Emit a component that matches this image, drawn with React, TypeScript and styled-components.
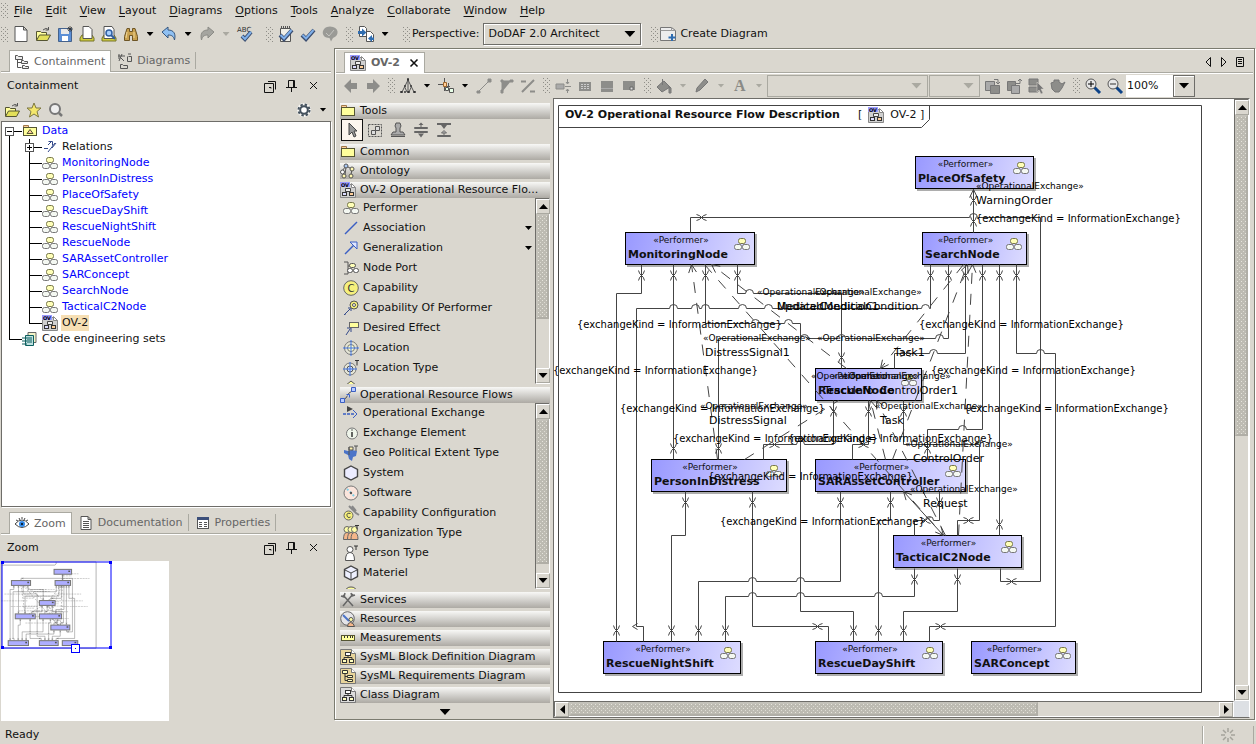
import React from "react";
import styled, { createGlobalStyle, css } from "styled-components";

/* ---------- theme ---------- */

const face = "#dad7cf";
const edgeDark = "#6e6d69";
const edgeMid = "#aaa9a1";
const ink = "#111";
const line = "#444";
const linkBlue = "#0000ff";

const GlobalStyle = createGlobalStyle`
  * { box-sizing: border-box; }
  body {
    margin: 0;
    background: ${face};
    color: ${ink};
    font: 11px/14px "DejaVu Sans", sans-serif;
    overflow: hidden;
  }
  button, input, select {
    font: inherit;
    color: inherit;
    margin: 0;
    padding: 0;
    border: 0;
    border-radius: 0;
    background: none;
  }
  ul { list-style: none; margin: 0; padding: 0; }
  svg { display: block; flex: none; }
`;

const dots = (a: string, b: string) => css`
  background-image:
    conic-gradient(from 270deg at 1px 1px, ${a} 90deg, transparent 0),
    conic-gradient(from 270deg at 1px 1px, ${b} 90deg, transparent 0);
  background-size: 4px 4px;
  background-position: 0 0, 2px 2px;
`;

/* ---------- icons ---------- */

const g = "#555";
const gray = "#8d8d8a";
const page = (fill = "#fff") => <path d="M3 1.500h7l3 3v10H3z M10 1.500v3h3" fill={fill} stroke={g} />;
const performer = (
  <>
    <rect x="4.500" y="2.500" width="7" height="5" rx="2" fill="#ffffb8" stroke="#77774a" />
    <path d="M6 8v1M10 8v1" stroke={g} />
    <rect x="0.500" y="8.500" width="7" height="5" rx="2" fill="#f4f8f2" stroke="#777" />
    <rect x="8.500" y="8.500" width="7" height="5" rx="2" fill="#f4f8f2" stroke="#777" />
  </>
);
const ovDoc = (
  <>
    <path d="M0.500 2.500h11l4 3v10h-15z" fill="#d0d0d0" stroke="#888" />
    <path d="M11.500 1.500v4h4z" fill="#fff" stroke="#888" />
    <rect x="0" y="0" width="10" height="5" fill="#9b9bff" />
    <text x="1" y="5" fontSize="5" fontWeight="bold" fill="#000">OV</text>
    <path d="M5.500 6.500h5v3h-5zM4 12v-1l2-1M12 12v-1l-2-1" fill="#eee" stroke="#444" />
    <rect x="2.500" y="10.500" width="4" height="3" fill="#dcdcff" stroke="#333" />
    <rect x="9.500" y="10.500" width="4" height="3" fill="#ffcf9a" stroke="#333" />
  </>
);
const folder = (
  <>
    <path d="M1.500 4.500v-2h5v2" fill="#ffcf9a" stroke="#a07a4a" />
    <rect x="1.500" y="4.500" width="13" height="8" fill="#ffff9c" stroke="#555533" />
  </>
);
const openFolder = (
  <>
    <path d="M1.500 14V5.500h4l1 1h5V9" fill="#ffff9c" stroke="#555533" />
    <path d="M1.500 14.500l3-5.500h11l-3 5.500z" fill="#e3e05a" stroke="#555533" />
    <path d="M8 4q3-3 5.500-.5M13.500 1v3h-3" fill="none" stroke={g} />
  </>
);
const boxDoc = (fill: string) => (
  <>
    <path d="M0.500 0.500h11l4 4v11h-15z" fill={fill} stroke="#777" />
    <path d="M11.500 0.500v4h4" fill="#fff" stroke="#777" />
  </>
);
const tree3 = (
  <>
    <path d="M8 6v2.500M4 11V8.500h8V11" fill="none" stroke="#333" />
    <rect x="5.500" y="3.500" width="5" height="3" fill="#fff" stroke="#333" />
    <rect x="2.500" y="10.500" width="4" height="3" fill="#ffffc0" stroke="#333" />
    <rect x="9.500" y="10.500" width="4" height="3" fill="#ffffc0" stroke="#333" />
  </>
);
const check = <path d="M2 9l4 4 8-9" fill="none" stroke="#3a4d70" strokeWidth="4" />;
const checkFill = <path d="M2.500 9l3.500 3.500 7.500-8.500" fill="none" stroke="#7fb0ea" strokeWidth="2" />;
const diagLine = <path d="M2 14L14 2" stroke="#3a5fc4" strokeWidth="1.500" />;
const target = (
  <>
    <circle cx="8" cy="8" r="6.500" fill="#e6e6d6" stroke="#777" />
    <circle cx="8" cy="8" r="3.500" fill="#ffffc8" stroke="#777" />
    <path d="M8 0v16M0 8h16" stroke="#3f74e8" />
  </>
);
const cube = (fill: string) => (
  <path d="M8 1l6.500 3.500v7L8 15l-6.500-3.500v-7z" fill={fill} stroke="#444" strokeWidth="1.400" />
);
const person = (x: number, fill: string) => (
  <>
    <path d={`M${x - 3.5} 14.500q0-7 3.500-7t3.500 7z`} fill={fill} stroke="#666" />
    <circle cx={x} cy="4.500" r="3" fill="#ffffa8" stroke="#666" />
  </>
);

const glyphs: Record<string, React.ReactNode> = {
  performer,
  ovDoc,
  folder,
  openFolder,
  newDoc: <path d="M2 .5h8.500l3.500 3.500v11.500H2z M10.500 .5v3.500H14" fill="#fff" stroke={g} />,
  save: (
    <>
      <path d="M1.500 2.500h13v13h-13z" fill="#5b8fd6" stroke="#45628c" />
      <rect x="4" y="3" width="8" height="5" fill="#e8e8e8" />
      <rect x="5" y="10" width="6" height="5" fill="#fff" />
      <path d="M13 0v6M10 3h6M11 1l4 4M15 1l-4 4" stroke="#333" strokeWidth=".8" />
    </>
  ),
  print: (
    <>
      <path d="M1 12l2-3h10l2 3v3H1z" fill="#d2ce3c" stroke="#77752a" />
      <path d="M4 .5h6l3 3v9H4z" fill="#fff" stroke={g} />
    </>
  ),
  preview: (
    <>
      <path d="M1 12l2-3h10l2 3v3H1z" fill="#d2ce3c" stroke="#77752a" />
      <path d="M3 .5h8l2 3v9H3z" fill="#fff" stroke={g} />
      <circle cx="8" cy="7" r="3" fill="#a8d0ff" stroke="#2f5ea0" strokeWidth="1.500" />
      <path d="M10 9l4 4" stroke="#2f5ea0" strokeWidth="2" />
    </>
  ),
  binoculars: (
    <>
      <path d="M4 2.500h2.500v3h3v-3H12l2.500 8v4H9.500v-5h-3v5h-5v-4z" fill="#c8a04e" stroke="#6d5526" />
      <path d="M4 6l-1 6M11 6v6" stroke="#efd79a" />
    </>
  ),
  undo: <path d="M1 6l6-5v3c6 0 8 4 6.500 10-1-4-3-5-6.500-5v3z" fill="#8fc0f2" stroke="#34557d" />,
  redo: <path d="M15 6L9 1v3C3 4 1 8 2.500 14c1-4 3-5 6.500-5v3z" fill="#a5a5a0" stroke="#8b8b86" />,
  spell: (
    <>
      <text x="0" y="6" fontSize="7" fill="#333">ABC</text>
      <path d="M5 10l3 3 6-7" fill="none" stroke="#3a4d70" strokeWidth="4" />
      <path d="M5 10l3 3 6-7" fill="none" stroke="#7fb0ea" strokeWidth="2" />
    </>
  ),
  checkDoc: (
    <>
      <path d="M2.500 2.500h10v13h-10z" fill="#f0f0e8" stroke={g} />
      <path d="M3 1h9" stroke={g} strokeWidth="2" strokeDasharray="1 1" />
      {check}{checkFill}
    </>
  ),
  check: <>{check}{checkFill}</>,
  balloon: (
    <>
      <path d="M8 .5c9 0 10 9 3 11.500L9 15.500 7.500 12C-2 12-1 .5 8 .5z" fill="#9a9a96" />
      <path d="M4 7l3 3 5-6" fill="none" stroke="#c4c4c0" />
    </>
  ),
  transfer: (
    <>
      <path d="M1.500 .5h5l2 2v8h-7zM8.500 5.500h4l3 3v7h-7z" fill="#fff" stroke={g} />
      <path d="M0 5h4V2.500l4.500 4L4 10.500V8H0zM16 11.500h-2V9l-4 3.500 4 3.500v-2h2z" fill="#2f6db0" />
    </>
  ),
  createDiagram: (
    <>
      <path d="M.5 1.500h11l4 3v10H.5z" fill="#ededed" stroke="#777" />
      <path d="M11.500 1.500v3h4M.5 4.500h11" fill="none" stroke="#999" />
      <path d="M12 8v7M8.500 11.500h7" stroke="#2f6db0" strokeWidth="2" />
    </>
  ),
  containment: (
    <>
      <path d="M3.500 5v8.500h4M3.500 8.500h4" fill="none" stroke={g} />
      <path d="M1.500 1.500h2l1 1h4v3h-7zM7.500 6.500h2l1 1h3v2h-6zM8.500 11.500h2l1 1h3v2h-6z" fill="#eee" stroke={g} />
    </>
  ),
  diagrams: (
    <path d="M1 3h7M2 1v5M5 1l-3 7M3 4l4 4M11.500 3.500h3v5h-4v-5M11 1h3M3.500 11.500h2l1 1h4v3h-7z" fill="none" stroke={g} />
  ),
  float: <path d="M2.500 5.500h9v9h-9zM6 3.500h7.500v8M7 9.500h2v1" fill="none" stroke="#111" />,
  pin: <path d="M4.500 9V2.500h6V9M2 9.500h11M7.500 10v4M9.500 3v6" fill="none" stroke="#111" />,
  close: <path d="M4 4l7 7M11 4l-7 7" stroke="#111" />,
  star: <path d="M8 1l2 5h5l-4 3.500 1.500 5.500L8 12l-4.500 3L5 9.500 1 6h5z" fill="#f4e76c" stroke="#7c7740" />,
  search: (
    <>
      <circle cx="7" cy="7" r="5" fill="#eee" stroke="#777" strokeWidth="2" />
      <path d="M11 11l3 3" stroke="#777" strokeWidth="2.500" />
    </>
  ),
  gear: (
    <>
      <circle cx="8" cy="8" r="7" fill="#f6f5f2" />
      <circle cx="8" cy="8" r="5.500" fill="none" stroke="#45525e" strokeWidth="2" strokeDasharray="2.400 1.920" />
      <circle cx="8" cy="8" r="3.800" fill="#fff" stroke="#45525e" strokeWidth="2" />
    </>
  ),
  package: (
    <>
      <path d="M1.500 4.500v-2h5v2" fill="#ffcf9a" stroke="#a07a4a" />
      <rect x="1.500" y="4.500" width="13" height="8" fill="#ffff9c" stroke="#555533" />
      <path d="M8 6.500l3 4H5z" fill="#ffcf9a" stroke="#555533" />
    </>
  ),
  relations: (
    <path d="M2 9.500h4M6 6l4-4M6.500 2.500h4v4M6 13l7-9M10 9l4-5" fill="none" stroke="#33498a" />
  ),
  codeSets: (
    <>
      <path d="M6 1.500h8v10H6z" fill="#f4f4c8" stroke="#666" />
      <path d="M3.500 4.500h8v10h-8z" fill="#bfe0e0" stroke="#0c5f5f" />
      <path d="M0 7h5M0 10h5M0 13h5M5 7h5M5 9h5M5 11h5" stroke="#0c5f5f" />
    </>
  ),
  eye: (
    <>
      <path d="M1 8q7-8 14 0-7 7-14 0z" fill="#fff" stroke="#444" />
      <path d="M2 4l2 1M8 1v2M14 4l-2 1M5 2l1 2M11 2l-1 2" stroke="#444" />
      <circle cx="8" cy="8" r="3" fill="#2f88e8" />
      <circle cx="8" cy="8" r="1" fill="#000" />
    </>
  ),
  doc: <>{page()}<path d="M5 6.500h6M5 8.500h6M5 10.500h6M5 12.500h6" stroke={g} /></>,
  props: (
    <>
      <rect x="2.500" y="2.500" width="11" height="11" fill="#fff" stroke={g} />
      <rect x="2" y="2" width="12" height="3" fill="#3c4f7a" />
      <path d="M4 7.500h3M4 9.500h3M4 11.500h3M9 7.500h3M9 9.500h3M9 11.500h3" stroke={g} />
    </>
  ),
  back: <path d="M1 8l7-7v4h6v6H8v4z" fill={gray} />,
  forward: <path d="M15 8L8 1v4H2v6h6v4z" fill={gray} />,
  layoutTree: (
    <>
      <path d="M8 2L2 14M8 2l6 12M8 2v12M4.500 8.500L7 14M11.500 8.500L9 14" fill="none" stroke={g} />
      <path d="M7.500 .5h1v2h-1zM4.500 7.500h1v1h-1zM10.500 7.500h1v1h-1zM.5 13.500h2v1h-2zM4.500 13.500h1v1h-1zM7.500 13.500h2v1h-2zM13.500 13.500h2v1h-2z" fill="#fff" stroke="#333" />
    </>
  ),
  routes: (
    <>
      <path d="M0 6.500h5M6.500 0v4M6.500 8v5M8 8.500h4M10.500 5v4" stroke={g} />
      <path d="M5.500 4.500h3v4h-3z" fill="#ffcf9a" stroke="#a0662a" />
      <path d="M7.500 9.500h3v3h-3zM11.500 10.500h4v4h-4z" fill="#e8ffe8" stroke={g} />
    </>
  ),
  lineDiag: <path d="M3 13L13 3M1 13h3v2H1zM12 1h3v3h-3z" fill={gray} stroke={gray} />,
  lineOrtho: <path d="M4 14V3h9M3 2h2v2H3zM12 2h3v2h-3zM3 12h2v3H3z" fill={gray} stroke={gray} />,
  lineBoth: <path d="M2 14L14 2M1 3.500h5M10 13.500h5" stroke={gray} strokeWidth="2" />,
  sizeTo: <path d="M1 6h8v5H1zM12.500 1v4M12.500 11v4M10 8.500h6M11 4l1.500 2L14 4M11 13l1.500-2 1.500 2" fill="#aaa" stroke={gray} />,
  grid1: <><rect x="2" y="4" width="12" height="9" fill={gray} /><path d="M4 6.500h8M4 8.500h8M4 10.500h8" stroke="#ccc" strokeDasharray="2 1" /></>,
  grid2: <><rect x="2" y="3" width="12" height="11" fill={gray} /><path d="M2 10.500h12" stroke="#aaa" /></>,
  grid3: <><rect x="2" y="3" width="12" height="9" fill={gray} /><path d="M9 9h3v3H9z" fill="#ddd" stroke="#666" /></>,
  fill: <path d="M6.500 1v6M6.500 4L1 9l5 5 8-5-6-6zM13 8l2 2v5h-2z" fill={gray} stroke="#777" />,
  pencil: <path d="M2 14l1-4 8-9 3 3-8 8z" fill={gray} stroke="#777" />,
  letterA: <text x="2" y="13" fontFamily="Liberation Serif, serif" fontWeight="bold" fontSize="16" fill="#8a8a86">A</text>,
  front: <><path d="M1.500 3.500h9v9h-9z" fill="#aaa" stroke="#777" /><path d="M6.500 7.500h9v8h-9z" fill={gray} stroke="#777" /><path d="M10 1.500h4V5M12 4l2 2 2-2" fill="none" stroke="#777" /></>,
  backOrder: <><path d="M1.500 3.500h8v9h-8z" fill={gray} stroke="#777" /><path d="M5.500 7.500h8v8h-8z" fill="#aaa" stroke="#777" /><path d="M10 5.500h4V2M12 3l2-2 2 2" fill="none" stroke="#777" /></>,
  selectAll: <><path d="M1 1h9v6H1zM1 9h9v5H1z" fill={gray} stroke="#777" /><path d="M9 4l7 7h-3l2 4-2 1-2-4-2 2z" fill="#777" stroke={face} strokeWidth=".5" /></>,
  styleOrder: <path d="M1 5l3-1V2h5v2l3 2 3-2-3 6-3 4H5l-3-3z" fill={gray} stroke="#777" />,
  zoomIn: <><path d="M9 9l6 6" stroke="#0d4388" strokeWidth="3" /><circle cx="6" cy="6" r="5" fill="#e8e8e8" stroke="#555" /><path d="M6 3v6M3 6h6" stroke="#000" /></>,
  zoomOut: <><path d="M9 9l6 6" stroke="#0d4388" strokeWidth="3" /><circle cx="6" cy="6" r="5" fill="#e8e8e8" stroke="#555" /><path d="M3 6h6" stroke="#333" /></>,
  prev: <path d="M10.500 3.500v9L6 8z" fill="none" stroke="#111" />,
  next: <path d="M5.500 3.500v9L10 8z" fill="none" stroke="#111" />,
  list: <path d="M4.500 3.500h7v9h-7zM6 5.500h4M6 7.500h4M6 9.500h4" fill="none" stroke="#111" />,
  bigClose: <path d="M4 4l8 8M12 4l-8 8" stroke="#111" strokeWidth="1.800" />,
  cursor: <path d="M5 1v12l3-3 2 5 2-1-2-5h3z" fill="#999" stroke="#444" />,
  marquee: <><path d="M1.500 2.500h13v12h-13z" fill="none" stroke={g} strokeDasharray="2 1" /><path d="M4.500 8.500h4v4h-4zM8.500 4.500h4v4h-4z" fill="#ddd" stroke={g} /></>,
  stamp: <><path d="M6 1h4l1 3-1 2v4h3l2 3H1l2-3h3V6L5 4z" fill="#aaa" stroke={g} /><path d="M1 14.500h14" stroke={g} /></>,
  spread: (
    <>
      <path d="M8 .5l2.500 2.500h-5zM8 15.500l3-4H5z" fill="#666" />
      <path d="M8 3v2.500M1.500 5.500h13v1h-13zM1.500 9.500h13v1h-13z" fill="#bbb" stroke="#666" />
    </>
  ),
  squeeze: (
    <>
      <path d="M1 1h14v2H1zM8 7l3-4H5z" fill="#666" />
      <path d="M8 8.500l2.500 2.500h-5zM8 11v2M1.500 13.500h13v1h-13z" fill="#bbb" stroke="#666" />
    </>
  ),
  ontology: (
    <>
      <path d="M6 3L2 8M6 3l6 3M6 4l-1 8M12 6l-1 6" stroke={g} />
      <circle cx="6" cy="3" r="2" fill="#a9c8f4" stroke={g} />
      <circle cx="12" cy="6" r="2" fill="#fff8b0" stroke={g} />
      <circle cx="2.500" cy="9" r="2" fill="#fff" stroke={g} />
      <circle cx="4" cy="13" r="2" fill="#fff8b0" stroke={g} />
      <circle cx="11" cy="13" r="2" fill="#fff8b0" stroke={g} />
    </>
  ),
  association: diagLine,
  generalization: <><path d="M2 14L11 5" stroke="#3a5fc4" strokeWidth="1.500" /><path d="M7 2h7v7z" fill="#dfe6ff" stroke="#3a5fc4" /></>,
  nodePort: <><path d="M1 2h4v3M5 11v3H1M5 5v6M5 6h2" fill="none" stroke={g} /><rect x="6.500" y="3.500" width="6" height="4" rx="2" fill="#ffffb8" stroke={g} /><rect x="4.500" y="8.500" width="5" height="4" rx="2" fill="#fff" stroke={g} /><rect x="10.500" y="8.500" width="5" height="4" rx="2" fill="#fff" stroke={g} /></>,
  capability: <><circle cx="8" cy="8" r="7.300" fill="#f6f07c" stroke="#666" /><text x="4.500" y="12" fontSize="10" fill="#333">C</text></>,
  capOf: <><path d="M1 15l6-6M2 14h1M5 8h3v3" fill="none" stroke="#33498a" /><circle cx="11" cy="5" r="4" fill="#f6f07c" stroke="#555" /><circle cx="11" cy="5" r="1.500" fill="#fff" stroke="#555" /></>,
  effect: <><path d="M3 15l4-6M4 8h4v4" fill="none" stroke="#33498a" /><rect x="6.500" y="2.500" width="9" height="5" fill="#ffff9c" stroke="#666" /></>,
  location: target,
  locationType: (
    <>
      <circle cx="7" cy="9" r="6" fill="#e6e6d6" stroke="#777" />
      <circle cx="7" cy="9" r="3" fill="#cfdcf4" stroke="#555" />
      <path d="M7 2v14M0 9h14" stroke="#3f74e8" />
      <path d="M12 .5h4M14 .5v5" stroke="#333" />
    </>
  ),
  peak: <path d="M8 1l6 5H2z" fill="#ffffa0" stroke={g} />,
  flows: <><path d="M3 13l3-2 3-5 5-3" fill="none" stroke={g} /><path d="M.5 11.500h4v4h-4zM11.500 .5h4v4h-4zM6.500 7.500h3v3" fill="#b8cbff" stroke="#3a5fc4" /></>,
  exchange: <><path d="M0 9h12" stroke="#3a5fc4" strokeDasharray="3 1" strokeWidth="1.500" /><path d="M10 5l4 4-4 4" fill="none" stroke="#3a5fc4" /><path d="M4 1l6 3-6 3z" fill="#444" /></>,
  element: <><circle cx="9" cy="8.500" r="5.500" fill="#eff5ea" stroke="#777" /><path d="M9 7v5M9 4.500v1" stroke="#333" strokeWidth="1.500" /></>,
  geo: <><path d="M1 5l4 1 4-1 5 1-1 5-3 1-1 4-3-2-1-4-4-2z" fill="#4b74c8" /><path d="M6 2h4v3H6zM6 2v8M11 1h4M13 1v5" fill="#fff2b0" stroke="#555" /></>,
  system: cube("#ececff"),
  software: <><circle cx="8" cy="8" r="7" fill="#fbe5dc" stroke="#777" /><path d="M4 4l8 8" stroke="#7fd0e8" strokeDasharray="2 2" strokeWidth="2" /><circle cx="8" cy="8" r="1.200" fill="#555" /></>,
  capConfig: <><path d="M6 1l7 7 3 2M9 1l4 5" stroke="#888" strokeWidth="2" fill="none" /><circle cx="5.500" cy="10.500" r="4.500" fill="#f6f07c" stroke="#666" /><path d="M7.500 8.500q-4-1-3.500 2t3.500 1.500" fill="none" stroke="#444" /></>,
  orgType: <>{person(4, "#f4b68a")}{person(8, "#f4b68a")}{person(11.5, "#f4b68a")}<path d="M12 .5h4M14 .5v4" stroke="#333" /></>,
  personType: <><path d="M2.500 15.500q0-8 4.500-8t4.500 8z" fill="#fff" stroke="#555" /><circle cx="7" cy="4.500" r="3" fill="#fff" stroke="#555" /><path d="M11 1h4M13 1v4" stroke="#333" /></>,
  materiel: <>{cube("#eef0ff")}<path d="M2 5l6 3 6-3M8 8v7" fill="none" stroke="#444" /></>,
  bulb: <path d="M3 6q0-4 5-4t5 4z" fill="#ffff9c" stroke={g} />,
  services: <path d="M3 3l10 11M13 2L3 14M1 4l3 1 1-4M11 1l1 3 3-1" fill="none" stroke="#666" strokeWidth="1.500" />,
  resources: <><circle cx="7.500" cy="7.500" r="6.800" fill="#e4e4e8" stroke="#666" /><path d="M3 4l6 6" stroke="#4b74c8" strokeWidth="2" /><circle cx="11" cy="8.500" r="2" fill="#ffffa8" stroke={g} /><path d="M7.500 15.500q0-4 3-4t4 4z" fill="#f4b68a" stroke={g} /></>,
  ruler: <><rect x="1.500" y="5.500" width="13" height="5" fill="#ffff9c" stroke="#555533" /><path d="M4.500 6v2M7.500 6v2M10.500 6v2M12.500 6v2" stroke="#333" /></>,
  bdd: <>{boxDoc("#e8d49a")}{tree3}</>,
  req: <>{boxDoc("#e8d49a")}<path d="M5 5v7.500h3M5 8.500h3" fill="none" stroke="#333" /><path d="M2.500 2.500h5v3h-5zM7.500 7.500h5v2h-5zM7.500 11.500h5v2h-5z" fill="#ffffc0" stroke="#333" /></>,
  classDiagram: <>{boxDoc("#dcdcdc")}{tree3}</>,
};

const IconSvg = styled.svg`
  overflow: visible;
`;

const Icon = ({ name, size = 16 }: { name: string; size?: number }) => (
  <IconSvg width={size} height={size} viewBox="0 0 16 16" fill="none" aria-hidden="true">
    {glyphs[name]}
  </IconSvg>
);

/* ---------- shared controls ---------- */

const ToolButton = styled.button<{ $active?: boolean; $narrow?: boolean }>`
  display: flex;
  align-items: center;
  justify-content: center;
  flex: none;
  width: ${(p) => (p.$narrow ? 16 : 22)}px;
  height: 22px;
  ${(p) => p.$active && "background: #fdf6ee; border: 1px solid #111;"}
`;

const Triangle = styled.span<{ $dir?: "down" | "up" | "left" | "right"; $dim?: boolean; $big?: boolean }>`
  display: block;
  width: ${(p) => (p.$big ? 11 : 7)}px;
  height: ${(p) => (p.$big ? 6 : 4)}px;
  background: ${(p) => (p.$dim ? "#aaa9a1" : "#000")};
  clip-path: polygon(0 0, 100% 0, 50% 100%);
  transform: rotate(${(p) => ({ down: 0, up: 180, left: 90, right: 270 })[p.$dir ?? "down"]}deg);
`;

const Grip = styled.span`
  flex: none;
  width: 8px;
  height: 15px;
  margin: 0 1px;
  ${dots("#8f8e88", "#8f8e88")}
`;

const Spacer = styled.span`
  flex: 1;
`;

const Tool = ({ icon, label }: { icon: string; label: string }) => (
  <ToolButton type="button" aria-label={label}>
    <Icon name={icon} />
  </ToolButton>
);

const Caret = ({ label, dim }: { label: string; dim?: boolean }) => (
  <ToolButton type="button" $narrow aria-label={label} disabled={dim}>
    <Triangle $dim={dim} />
  </ToolButton>
);

/* ---------- scroll bars ---------- */

const Track = styled.div<{ $horizontal?: boolean }>`
  display: flex;
  flex-direction: ${(p) => (p.$horizontal ? "row" : "column")};
  flex: none;
  ${(p) => (p.$horizontal ? "height: 16px;" : "width: 15px;")}
  background: ${face};
  border: 1px solid ${edgeDark};
  border-right-color: #fff;
  border-bottom-color: #fff;
`;

const TrackButton = styled.button`
  display: flex;
  align-items: center;
  justify-content: center;
  flex: none;
  width: 14px;
  height: 15px;
  background: ${face};
  border: 1px solid #fff;
  border-right-color: ${edgeMid};
  border-bottom-color: ${edgeMid};
  > span { width: 9px; height: 5px; flex: none; }
`;

const Thumb = styled.div<{ $share: number }>`
  flex: ${(p) => p.$share} 1 0;
  background-color: #bdbbb2;
  border: 2px solid #c4c2ba;
  border-right-color: #b0aea6;
  border-bottom-color: #b0aea6;
  ${dots("#e6e4dc", "#dddbd3")}
`;

const TrackRest = styled.div<{ $share: number }>`
  flex: ${(p) => p.$share} 1 0;
`;

const ScrollBar = ({ share, horizontal }: { share: number; horizontal?: boolean }) => (
  <Track $horizontal={horizontal}>
    <TrackButton type="button" aria-label={horizontal ? "Scroll left" : "Scroll up"}>
      <Triangle $dir={horizontal ? "left" : "up"} />
    </TrackButton>
    <Thumb $share={share} />
    <TrackRest $share={100 - share} />
    <TrackButton type="button" aria-label={horizontal ? "Scroll right" : "Scroll down"}>
      <Triangle $dir={horizontal ? "right" : "down"} />
    </TrackButton>
  </Track>
);

/* ---------- frame ---------- */

const Shell = styled.div`
  display: flex;
  flex-direction: column;
  height: 100vh;
`;

const MenuBar = styled.nav`
  display: flex;
  align-items: center;
  gap: 1px;
  flex: none;
  height: 20px;
  padding-top: 1px;
`;

const MenuItem = styled.button`
  padding: 0 6px;
  line-height: 18px;
  &::first-letter {
    text-decoration: underline;
    text-underline-offset: 2px;
  }
  &:first-of-type {
    padding-left: 3px;
  }
`;

const MainToolbar = styled.div`
  display: flex;
  align-items: center;
  flex: none;
  height: 28px;
`;

const ToolGroup = styled.div<{ $tight?: boolean }>`
  display: flex;
  align-items: center;
  margin-right: ${(p) => (p.$tight ? 4 : 9)}px;
`;

const PerspectiveField = styled.label`
  display: flex;
  align-items: center;
  gap: 4px;
`;

const SelectWrap = styled.span`
  display: grid;
  align-items: center;
  flex: none;
  width: 158px;
  height: 22px;
  border: 1px solid ${edgeDark};
  box-shadow: inset 1px 1px #fff, 1px 1px #fff;
  > * { grid-area: 1 / 1; }
  > span { justify-self: end; margin-right: 5px; pointer-events: none; }
`;

const Select = styled.select`
  appearance: none;
  width: 100%;
  padding-left: 4px;
`;

const TextButton = styled.button`
  display: flex;
  align-items: center;
  gap: 4px;
`;

const Body = styled.main`
  display: flex;
  flex: 1;
  min-height: 0;
`;

const StatusBar = styled.footer`
  display: flex;
  align-items: center;
  flex: none;
  height: 23px;
  padding: 4px 2px 0 5px;
`;

const BusyCell = styled.div`
  display: flex;
  align-items: center;
  justify-content: center;
  width: 52px;
  height: 18px;
  border-left: 1px solid ${edgeMid};
  border-right: 1px solid ${edgeMid};
  box-shadow: inset 1px 0 #fff;
`;

/* ---------- left column ---------- */

const Side = styled.aside`
  display: flex;
  flex-direction: column;
  flex: none;
  width: 333px;
  padding: 2px 2px 0 1px;
`;

const TabRow = styled.div<{ $spaced?: boolean }>`
  display: flex;
  align-items: stretch;
  flex: none;
  height: 22px;
  margin-top: ${(p) => (p.$spaced ? 5 : 0)}px;
  padding-left: 8px;
  border-bottom: 1px solid ${edgeMid};
  box-shadow: 0 1px #fff;
`;

const Tab = styled.button<{ $active?: boolean }>`
  display: flex;
  align-items: center;
  gap: 4px;
  padding: 0 5px 0 4px;
  color: #666;
  border-right: 1px solid ${edgeMid};
  ${(p) =>
    p.$active
      ? `background: #fff; border-left: 1px solid ${edgeMid}; border-top: 1px solid ${edgeMid}; margin-bottom: -1px;`
      : "margin: 2px 0; padding-left: 6px;"}
`;

const PaneHeader = styled.header`
  display: flex;
  align-items: center;
  flex: none;
  height: 27px;
  padding: 0 6px;
`;

const PaneTools = styled.div`
  display: flex;
  align-items: center;
  flex: none;
  height: 22px;
  padding-bottom: 1px;
`;

const Tree = styled.ul`
  flex: 1;
  min-height: 0;
  overflow: hidden;
  && { padding-top: 1px; }
  background: #fff;
  border: 1px solid ${edgeDark};
  box-shadow: 1px 1px #fff;
`;

const TreeRow = styled.li`
  display: flex;
  align-items: center;
  height: 16px;
`;

type GuideKind = "root" | "open" | "closed" | "pipe" | "tee" | "end" | "none";

const Guide = styled.span<{ $kind: GuideKind }>`
  display: flex;
  align-items: center;
  flex: none;
  width: 20px;
  height: 16px;
  padding-left: 3px;
  background:
    linear-gradient(#000, #000) 7px ${(p) => (p.$kind === "root" ? "8px" : "0")} / 1px
      ${(p) => ({ end: "8px", none: "0" } as Record<string, string>)[p.$kind] ?? "16px"} no-repeat,
    linear-gradient(#000, #000) 7px 8px /
      ${(p) => (p.$kind === "pipe" || p.$kind === "none" ? "0" : "13px")} 1px no-repeat;
`;

const Expander = styled.button`
  display: grid;
  width: 9px;
  height: 9px;
  margin-top: 1px;
  background: #fff;
  border: 1px solid #555;
`;

const TreeLabel = styled.a<{ $plain?: boolean; $selected?: boolean }>`
  margin-left: 3px;
  padding: 0 1px;
  line-height: 16px;
  color: ${(p) => (p.$plain ? ink : linkBlue)};
  text-decoration: none;
  ${(p) => p.$selected && "background: #f6dfb4;"}
`;

const Expand = ({ open }: { open: boolean }) => (
  <Expander type="button" aria-label={open ? "Collapse" : "Expand"}>
    <svg width="7" height="7" aria-hidden="true">
      <path d={open ? "M1 3.500h5" : "M1 3.500h5M3.500 1v5"} stroke="#000" />
    </svg>
  </Expander>
);

const treeNodes = [
  "MonitoringNode", "PersonInDistress", "PlaceOfSafety", "RescueDayShift", "RescueNightShift",
  "RescueNode", "SARAssetController", "SARConcept", "SearchNode", "TacticalC2Node",
];

const ContainmentTree = () => (
  <Tree>
    <TreeRow>
      <Guide $kind="root"><Expand open /></Guide>
      <Icon name="package" />
      <TreeLabel href="#data">Data</TreeLabel>
    </TreeRow>
    <TreeRow>
      <Guide $kind="pipe" />
      <Guide $kind="tee"><Expand open={false} /></Guide>
      <Icon name="relations" />
      <TreeLabel href="#relations" $plain>Relations</TreeLabel>
    </TreeRow>
    {treeNodes.map((name) => (
      <TreeRow key={name}>
        <Guide $kind="pipe" />
        <Guide $kind="tee" />
        <Icon name="performer" />
        <TreeLabel href={`#${name}`}>{name}</TreeLabel>
      </TreeRow>
    ))}
    <TreeRow>
      <Guide $kind="pipe" />
      <Guide $kind="end" />
      <Icon name="ovDoc" />
      <TreeLabel href="#ov-2" $plain $selected>OV-2</TreeLabel>
    </TreeRow>
    <TreeRow>
      <Guide $kind="end" />
      <Icon name="codeSets" />
      <TreeLabel href="#code" $plain>Code engineering sets</TreeLabel>
    </TreeRow>
  </Tree>
);

const PaneTitle = ({ title }: { title: string }) => (
  <PaneHeader>
    {title}
    <Spacer />
    <Tool icon="float" label={`Float ${title}`} />
    <Tool icon="pin" label={`Pin ${title}`} />
    <Tool icon="close" label={`Close ${title}`} />
  </PaneHeader>
);

/* ---------- diagram model ---------- */

type Point = [number, number];
const VIEW = { x: 554, y: 99 };

const nodes = [
  { name: "PlaceOfSafety", x: 915, y: 156, w: 119 },
  { name: "MonitoringNode", x: 625, y: 232, w: 130 },
  { name: "SearchNode", x: 922, y: 232, w: 105 },
  { name: "RescueNode", x: 815, y: 368, w: 107 },
  { name: "PersonInDistress", x: 651, y: 459, w: 136 },
  { name: "SARAssetController", x: 815, y: 459, w: 151 },
  { name: "TacticalC2Node", x: 893, y: 535, w: 129 },
  { name: "RescueNightShift", x: 603, y: 641, w: 138 },
  { name: "RescueDayShift", x: 815, y: 641, w: 128 },
  { name: "SARConcept", x: 971, y: 641, w: 105 },
];
const NODE_H = 33;

/* hops are [x, y] crossings where a horizontal run jumps over another line */
const edges: { pts: Point[]; hops?: Point[] }[] = [
  { pts: [[690, 232], [690, 217], [1040, 217], [1040, 581], [1000, 581], [1000, 568]], hops: [[973, 217]] },
  { pts: [[973, 189], [973, 232]] },
  { pts: [[641, 264], [641, 293], [616, 293], [616, 641]] },
  { pts: [[673, 264], [673, 459]] },
  { pts: [[705, 264], [705, 323], [800, 323], [800, 611], [853, 611], [853, 641]], hops: [[755, 323], [788, 323]] },
  { pts: [[737, 264], [737, 293], [841, 293], [841, 368]], hops: [[749, 293]] },
  {
    pts: [[930, 264], [930, 308], [636, 308], [636, 626], [643, 626], [643, 641]],
    hops: [[925, 308], [768, 308], [742, 308], [705, 308], [695, 308], [673, 308]],
  },
  { pts: [[948, 264], [948, 338], [718, 338], [718, 459]], hops: [[939, 338], [841, 338], [804, 338]] },
  { pts: [[965, 264], [965, 353], [894, 353], [894, 368]], hops: [[933, 353]] },
  { pts: [[982, 264], [982, 429], [927, 429], [927, 459]], hops: [[962, 429]] },
  { pts: [[999, 264], [999, 535]] },
  { pts: [[1016, 264], [1016, 353], [1055, 353], [1055, 626], [929, 626], [929, 641]], hops: [[1040, 353]] },
  { pts: [[833, 400], [833, 444], [763, 444], [763, 459]], hops: [[800, 444]] },
  { pts: [[868, 400], [868, 444], [852, 444], [852, 459]] },
  { pts: [[903, 400], [903, 444], [979, 444], [979, 520], [957, 520], [957, 535]] },
  { pts: [[685, 491], [685, 535], [671, 535], [671, 641]] },
  { pts: [[752, 491], [752, 626], [828, 626], [828, 641]] },
  { pts: [[840, 491], [840, 581], [698, 581], [698, 641]], hops: [[800, 581], [752, 581]] },
  { pts: [[890, 491], [890, 520], [878, 520], [878, 641]] },
  { pts: [[939, 491], [939, 520], [914, 520], [914, 535]], hops: [[929, 520]] },
  { pts: [[914, 568], [914, 596], [725, 596], [725, 641]], hops: [[878, 596], [800, 596], [752, 596]] },
  { pts: [[957, 568], [957, 611], [903, 611], [903, 641]] },
];

const exchanges: { from: Point; to: Point; solid?: boolean; plain?: boolean }[] = [
  { from: [744, 459], to: [838, 400], plain: true },
  { from: [717, 459], to: [691, 264] },
  { from: [704, 264], to: [943, 535] },
  { from: [943, 535], to: [903, 491], solid: true },
  { from: [846, 368], to: [711, 264] },
  { from: [963, 264], to: [880, 368] },
  { from: [892, 459], to: [967, 264] },
  { from: [958, 535], to: [972, 264] },
  { from: [885, 459], to: [870, 400] },
  { from: [945, 535], to: [876, 400] },
  { from: [973, 232], to: [973, 189], solid: true },
];

type LabelKind = "stereo" | "name" | "kind";
const OP = "«OperationalExchange»";
const EK = "{exchangeKind = InformationExchange}";
const labels: { kind: LabelKind; x: number; y: number; text: string }[] = [
  { kind: "stereo", x: 976, y: 186, text: OP },
  { kind: "name", x: 976, y: 200, text: "WarningOrder" },
  { kind: "kind", x: 976, y: 218, text: EK },
  { kind: "stereo", x: 757, y: 292, text: OP },
  { kind: "stereo", x: 814, y: 292, text: OP },
  { kind: "name", x: 777, y: 306, text: "UpdatedMedicalCondition" },
  { kind: "name", x: 777, y: 306, text: "MedicalCondition1" },
  { kind: "kind", x: 577, y: 324, text: EK },
  { kind: "kind", x: 919, y: 324, text: EK },
  { kind: "stereo", x: 703, y: 338, text: OP },
  { kind: "stereo", x: 817, y: 338, text: OP },
  { kind: "name", x: 705, y: 352, text: "DistressSignal1" },
  { kind: "name", x: 894, y: 352, text: "Task1" },
  { kind: "kind", x: 553, y: 370, text: EK },
  { kind: "kind", x: 931, y: 370, text: EK },
  { kind: "stereo", x: 811, y: 376, text: OP },
  { kind: "stereo", x: 843, y: 376, text: OP },
  { kind: "name", x: 824, y: 390, text: "TrackInfo" },
  { kind: "name", x: 880, y: 390, text: "ControlOrder1" },
  { kind: "stereo", x: 700, y: 406, text: OP },
  { kind: "kind", x: 620, y: 408, text: EK },
  { kind: "name", x: 709, y: 420, text: "DistressSignal" },
  { kind: "stereo", x: 875, y: 406, text: OP },
  { kind: "name", x: 880, y: 420, text: "Task" },
  { kind: "kind", x: 964, y: 408, text: EK },
  { kind: "kind", x: 673, y: 438, text: EK },
  { kind: "kind", x: 788, y: 438, text: EK },
  { kind: "stereo", x: 905, y: 444, text: OP },
  { kind: "name", x: 913, y: 458, text: "ControlOrder" },
  { kind: "kind", x: 708, y: 476, text: EK },
  { kind: "stereo", x: 910, y: 489, text: OP },
  { kind: "name", x: 923, y: 503, text: "Request" },
  { kind: "kind", x: 720, y: 521, text: EK },
];

/* Orthogonal route; horizontal runs jump over the lines they cross. */
const routePath = ({ pts, hops = [] }: { pts: Point[]; hops?: Point[] }) => {
  let d = `M${pts[0][0]} ${pts[0][1]}`;
  for (let i = 1; i < pts.length; i++) {
    const [x0, y0] = pts[i - 1];
    const [x1, y1] = pts[i];
    if (y0 === y1) {
      const dir = Math.sign(x1 - x0);
      hops
        .filter(([, y]) => y === y0)
        .map(([x]) => x)
        .sort((a, b) => (a - b) * dir)
        .forEach((h) => {
          d += `H${h - 4 * dir}A4 4 0 0 ${dir > 0 ? 1 : 0} ${h + 4 * dir} ${y0}`;
        });
    }
    d += `L${x1} ${y1}`;
  }
  return d;
};

/* End mark 11 units from the node, carried round the corner when the first run is short. */
const endMark = (pts: Point[]) => {
  const run = Math.abs(pts[1][0] - pts[0][0]) + Math.abs(pts[1][1] - pts[0][1]);
  const [a, b] = run > 20 ? [pts[0], pts[1]] : [pts[1], pts[2]];
  const short = Math.abs(b[0] - a[0]) + Math.abs(b[1] - a[1]) < 11;
  const x = a[0] + 11 * Math.sign(b[0] - a[0]);
  const y = a[1] + 11 * Math.sign(b[1] - a[1]);
  if (short) return `M${x + 5} ${y - 3}L${x} ${y}L${x + 5} ${y + 3}`;
  return a[0] === b[0]
    ? `M${x - 3} ${y - 5}Q${x - 2} ${y - 1} ${x} ${y}Q${x + 2} ${y - 1} ${x + 3} ${y - 5}M${x - 3} ${y + 5}Q${x - 2} ${y + 1} ${x} ${y}Q${x + 2} ${y + 1} ${x + 3} ${y + 5}`
    : `M${x - 5} ${y - 3}Q${x - 1} ${y - 2} ${x} ${y}Q${x - 1} ${y + 2} ${x - 5} ${y + 3}M${x + 5} ${y - 3}Q${x + 1} ${y - 2} ${x} ${y}Q${x + 1} ${y + 2} ${x + 5} ${y + 3}`;
};

const arrowHead = (from: Point, to: Point) => {
  const t = Math.atan2(to[1] - from[1], to[0] - from[0]);
  const at = (o: number) => `${to[0] - 9 * Math.cos(t + o)} ${to[1] - 9 * Math.sin(t + o)}`;
  return `M${at(0.45)}L${to[0]} ${to[1]}L${at(-0.45)}`;
};

const Wires = () => (
  <g fill="none" stroke={line}>
    {edges.map((e, i) => (
      <g key={i}>
        <path d={routePath(e)} />
        <path d={endMark(e.pts) + endMark([...e.pts].reverse())} />
      </g>
    ))}
    {exchanges.map((e, i) => (
      <g key={i}>
        <path d={`M${e.from.join(" ")}L${e.to.join(" ")}`} strokeDasharray={e.solid ? undefined : "11 10"} />
        {!e.plain && <path d={arrowHead(e.from, e.to)} />}
      </g>
    ))}
  </g>
);

/* ---------- diagram canvas ---------- */

const Canvas = styled.section`
  position: relative;
  flex: 1;
  min-width: 0;
  overflow: hidden;
  background: #fff;
`;

const DiagramTitle = styled.h1`
  position: absolute;
  left: 11px;
  top: 8px;
  display: flex;
  align-items: center;
  gap: 18px;
  margin: 0;
  font-size: 11px;
  line-height: 14px;
  > span { display: flex; align-items: center; gap: 6px; font-weight: normal; }
`;

const NodeBox = styled.article<{ $x: number; $y: number; $w: number }>`
  position: absolute;
  left: ${(p) => p.$x}px;
  top: ${(p) => p.$y}px;
  display: flex;
  justify-content: space-between;
  width: ${(p) => p.$w}px;
  height: ${NODE_H}px;
  padding: 0 4px 0 2px;
  background: linear-gradient(105deg, #9999ff, #dddcff);
  border: 1px solid #000;
  box-shadow: 2px 2px #adadad;
  > svg { margin-top: 3px; }
`;

const stereoFont = css`
  font-family: "DejaVu Sans Condensed", "DejaVu Sans", sans-serif;
  font-stretch: condensed;
  font-size: 10px;
`;

const NodeText = styled.div`
  flex: 1;
  min-width: 0;
  white-space: nowrap;
  > small { display: block; font-size: 9px; line-height: 15px; text-align: center; }
  > strong { display: block; line-height: 14px; }
`;

const WireLayer = styled.svg`
  position: absolute;
  inset: 0;
`;

const labelFont = {
  stereo: css`font-size: 9px;`,
  name: css`font-size: 11px;`,
  kind: css`font-size: 10px;`,
};

const Label = styled.span<{ $x: number; $y: number; $kind: LabelKind }>`
  position: absolute;
  left: ${(p) => p.$x}px;
  top: ${(p) => p.$y}px;
  line-height: 14px;
  white-space: nowrap;
  color: #000;
  ${(p) => labelFont[p.$kind]}
`;

const DiagramCanvas = () => (
  <Canvas aria-label="OV-2 diagram">
    <WireLayer width="700" height="620" viewBox={`${VIEW.x} ${VIEW.y} 700 620`} aria-hidden="true">
      <g transform="translate(.5 .5)" fill="none" stroke={line}>
        <path d="M558 105h643v587h-643zM558 127h363l8-8v-14" />
      </g>
    </WireLayer>
    <DiagramTitle>
      OV-2 Operational Resource Flow Description
      <span>[ <Icon name="ovDoc" /> OV-2 ]</span>
    </DiagramTitle>
    {nodes.map((n) => (
      <NodeBox key={n.name} $x={n.x - VIEW.x} $y={n.y - VIEW.y} $w={n.w}>
        <NodeText>
          <small>«Performer»</small>
          <strong>{n.name}</strong>
        </NodeText>
        <Icon name="performer" />
      </NodeBox>
    ))}
    <WireLayer width="700" height="620" viewBox={`${VIEW.x} ${VIEW.y} 700 620`} aria-hidden="true">
      <g transform="translate(.5 .5)">
        <Wires />
      </g>
    </WireLayer>
    {labels.map((l, i) => (
      <Label key={i} $kind={l.kind} $x={l.x - VIEW.x} $y={l.y - VIEW.y - (l.kind === "stereo" ? 7 : 6)}>
        {l.text}
      </Label>
    ))}
  </Canvas>
);

const MiniView = styled.div`
  flex: none;
  width: 168px;
  height: 160px;
  background: #fff;
`;

const Miniature = () => (
  <MiniView>
    <svg width="168" height="160" viewBox="0 0 168 160" role="img" aria-label="Diagram overview">
      <g transform={`scale(.147) translate(${-VIEW.x} ${-VIEW.y})`}>
        <path d="M558 105h643v587h-643zM558 127h363l8-8v-14" fill="none" stroke="#aaa" strokeWidth="6" />
        <g strokeWidth="3" opacity=".8"><Wires /></g>
        {labels.map((l, i) => (
          <path key={i} d={`M${l.x} ${l.y}h${l.text.length * 5}`} stroke="#777" strokeWidth="4" strokeDasharray="14 5" opacity=".6" />
        ))}
        {nodes.map((n) => (
          <g key={n.name}>
            <rect x={n.x} y={n.y} width={n.w} height={NODE_H} fill="#adadff" stroke="#777" strokeWidth="7" />
            <rect x={n.x + n.w - 22} y={n.y + 8} width="12" height="10" fill="#555" />
          </g>
        ))}
      </g>
      <rect x="1" y="1" width="109" height="86" fill="none" stroke="#0000ff" />
      <path d="M0 0h3v3H0zM108 0h3v3h-3zM0 85h3v3H0zM108 85h3v3h-3z" fill="#0000ff" />
      <rect x="70.500" y="83.500" width="8" height="8" fill="#fff" stroke="#0000ff" />
      <rect x="74" y="87" width="1" height="1" fill="#0000ff" />
    </svg>
  </MiniView>
);

/* ---------- palette ---------- */

const Palette = styled.aside`
  display: flex;
  flex-direction: column;
  gap: 3px;
  flex: none;
  width: 210px;
  padding-top: 5px;
`;

const Section = styled.section<{ $fill?: boolean }>`
  display: flex;
  flex-direction: column;
  ${(p) => (p.$fill ? "flex: 1 1 0; min-height: 0;" : "flex: none;")}
`;

const SectionHeader = styled.button`
  display: flex;
  align-items: center;
  gap: 4px;
  flex: none;
  height: 16px;
  text-align: left;
  background: linear-gradient(#f8f8f6, #adaaa4);
  > span { white-space: nowrap; }
`;

const ToolStrip = styled.div`
  display: flex;
  gap: 1px;
  padding-left: 1px;
`;

const ItemArea = styled.div`
  display: flex;
  flex: 1;
  min-height: 0;
`;

const ItemList = styled.ul`
  flex: 1;
  min-height: 0;
  overflow: hidden;
`;

const PaletteItem = styled.button`
  display: flex;
  align-items: center;
  gap: 4px;
  width: 100%;
  height: 20px;
  padding: 0 3px;
  text-align: left;
  > span:last-of-type:not(:first-of-type) { margin-left: auto; }
`;

const MoreButton = styled.button`
  display: flex;
  align-items: center;
  justify-content: center;
  flex: none;
  height: 12px;
`;

const resourceItems: [string, string, boolean?][] = [
  ["performer", "Performer"],
  ["association", "Association", true],
  ["generalization", "Generalization", true],
  ["nodePort", "Node Port"],
  ["capability", "Capability"],
  ["capOf", "Capability Of Performer"],
  ["effect", "Desired Effect"],
  ["location", "Location"],
  ["locationType", "Location Type"],
  ["peak", ""],
];

const flowItems: [string, string, boolean?][] = [
  ["exchange", "Operational Exchange"],
  ["element", "Exchange Element"],
  ["geo", "Geo Political Extent Type"],
  ["system", "System"],
  ["software", "Software"],
  ["capConfig", "Capability Configuration"],
  ["orgType", "Organization Type"],
  ["personType", "Person Type"],
  ["materiel", "Materiel"],
  ["bulb", ""],
];

const Header = ({ icon, title }: { icon: string; title: string }) => (
  <SectionHeader type="button">
    <Icon name={icon} />
    <span>{title}</span>
  </SectionHeader>
);

const ItemSection = ({ icon, title, items, share }: {
  icon: string; title: string; items: [string, string, boolean?][]; share: number;
}) => (
  <Section $fill>
    <Header icon={icon} title={title} />
    <ItemArea>
      <ItemList>
        {items.map(([glyph, name, more]) => (
          <li key={glyph}>
            <PaletteItem type="button" aria-label={name || "More"}>
              <Icon name={glyph} />
              <span>{name}</span>
              {more && <Triangle />}
            </PaletteItem>
          </li>
        ))}
      </ItemList>
      <ScrollBar share={share} />
    </ItemArea>
  </Section>
);

const DiagramPalette = () => (
  <Palette>
    <Section>
      <Header icon="folder" title="Tools" />
      <ToolStrip>
        <ToolButton type="button" $active aria-label="Selection"><Icon name="cursor" /></ToolButton>
        <Tool icon="marquee" label="Marquee" />
        <Tool icon="stamp" label="Sticky button" />
        <Tool icon="spread" label="Make space" />
        <Tool icon="squeeze" label="Remove space" />
      </ToolStrip>
    </Section>
    <Section><Header icon="folder" title="Common" /></Section>
    <Section><Header icon="ontology" title="Ontology" /></Section>
    <ItemSection icon="ovDoc" title="OV-2 Operational Resource Flo..." items={resourceItems} share={67} />
    <ItemSection icon="flows" title="Operational Resource Flows" items={flowItems} share={94} />
    <Section><Header icon="services" title="Services" /></Section>
    <Section><Header icon="resources" title="Resources" /></Section>
    <Section><Header icon="ruler" title="Measurements" /></Section>
    <Section><Header icon="bdd" title="SysML Block Definition Diagram" /></Section>
    <Section><Header icon="req" title="SysML Requirements Diagram" /></Section>
    <Section><Header icon="classDiagram" title="Class Diagram" /></Section>
    <MoreButton type="button" aria-label="More sections"><Triangle $big /></MoreButton>
  </Palette>
);

/* ---------- document area ---------- */

const Workbench = styled.section`
  display: flex;
  flex-direction: column;
  flex: 1;
  min-width: 0;
  margin: 0 1px 1px;
  padding: 3px 4px 1px 5px;
  border: 1px solid #7b7b70;
  box-shadow: inset 1px 1px #fff, 1px 1px #fff;
`;

const DocTabs = styled.div`
  display: flex;
  align-items: stretch;
  flex: none;
  height: 21px;
  margin: 0 -3px 0 -4px;
  padding-left: 8px;
  border-bottom: 1px solid ${edgeMid};
  box-shadow: 0 1px #fff;
`;

const DocTab = styled.div`
  display: flex;
  align-items: center;
  gap: 6px;
  margin-bottom: -1px;
  padding: 0 2px 0 5px;
  background: #fff;
  border: 1px solid ${edgeMid};
  border-bottom: 0;
`;

const DocTabName = styled.button`
  display: flex;
  align-items: center;
  gap: 5px;
  font-weight: bold;
  color: #666;
`;

const TabNav = styled.div`
  display: flex;
  align-items: center;
  margin-left: auto;
  padding-right: 5px;
  > button { width: 16px; }
`;

const DocToolbar = styled.div`
  display: flex;
  align-items: center;
  flex: none;
  height: 25px;
  > ${Grip} { margin-left: 4px; }
`;

const DisabledSelect = styled(SelectWrap)<{ $wide?: boolean }>`
  width: ${(p) => (p.$wide ? 161 : 51)}px;
  margin-right: 1px;
  border-color: ${edgeMid};
  box-shadow: none;
`;

const ZoomField = styled.input`
  width: 47px;
  height: 22px;
  padding-left: 1px;
  background: #fff;
`;

const ZoomDrop = styled.button`
  display: flex;
  align-items: center;
  justify-content: center;
  width: 22px;
  height: 22px;
  border: 1px solid ${edgeDark};
  box-shadow: inset 1px 1px #fff;
`;

const DocBody = styled.div`
  display: flex;
  flex: 1;
  min-height: 0;
`;

const Viewer = styled.div`
  display: flex;
  flex-direction: column;
  flex: 1;
  min-width: 0;
  margin-left: 3px;
  border: 1px solid ${edgeDark};
  border-right-color: #fff;
`;

const ViewerRow = styled.div`
  display: flex;
  flex: 1;
  min-height: 0;
`;

const ViewerFoot = styled.div`
  display: flex;
  flex: none;
  > :first-child { flex: 1; }
`;

const Corner = styled.span`
  width: 15px;
  background: #dde0e4;
`;

const menus = ["File", "Edit", "View", "Layout", "Diagrams", "Options", "Tools", "Analyze", "Collaborate", "Window", "Help"];

export default function App() {
  return (
    <Shell>
      <GlobalStyle />
      <MenuBar>
        <Grip />
        {menus.map((m) => (
          <MenuItem key={m} type="button">{m}</MenuItem>
        ))}
      </MenuBar>

      <MainToolbar>
        <ToolGroup>
          <Grip />
          <Tool icon="newDoc" label="New project" />
          <Tool icon="openFolder" label="Open project" />
          <Tool icon="save" label="Save" />
          <Tool icon="print" label="Print" />
          <Tool icon="preview" label="Print preview" />
          <Tool icon="binoculars" label="Find" />
          <Caret label="Find options" />
          <Tool icon="undo" label="Undo" />
          <Caret label="Undo history" />
          <Tool icon="redo" label="Redo" />
          <Caret label="Redo history" dim />
          <Tool icon="spell" label="Spelling" />
        </ToolGroup>
        <ToolGroup $tight>
          <Grip />
          <Tool icon="checkDoc" label="Validate" />
          <Tool icon="check" label="Validate active" />
          <Tool icon="balloon" label="Validation results" />
        </ToolGroup>
        <ToolGroup>
          <Grip />
          <Tool icon="transfer" label="Model transformations" />
          <Caret label="Transformation options" />
        </ToolGroup>
        <ToolGroup>
          <Grip />
          <PerspectiveField>
            Perspective:
            <SelectWrap>
              <Select defaultValue="DoDAF 2.0 Architect">
                <option>DoDAF 2.0 Architect</option>
              </Select>
              <Triangle $big />
            </SelectWrap>
          </PerspectiveField>
        </ToolGroup>
        <Grip />
        <TextButton type="button">
          <Icon name="createDiagram" />
          Create Diagram
        </TextButton>
      </MainToolbar>

      <Body>
        <Side>
          <TabRow>
            <Tab type="button" $active><Icon name="containment" />Containment</Tab>
            <Tab type="button"><Icon name="diagrams" />Diagrams</Tab>
          </TabRow>
          <PaneTitle title="Containment" />
          <PaneTools>
            <Tool icon="openFolder" label="Open in tree" />
            <Tool icon="star" label="Favorites" />
            <Tool icon="search" label="Find in tree" />
            <Spacer />
            <Tool icon="gear" label="Tree options" />
            <Caret label="More tree options" />
          </PaneTools>
          <ContainmentTree />
          <TabRow $spaced>
            <Tab type="button" $active><Icon name="eye" />Zoom</Tab>
            <Tab type="button"><Icon name="doc" />Documentation</Tab>
            <Tab type="button"><Icon name="props" />Properties</Tab>
          </TabRow>
          <PaneTitle title="Zoom" />
          <Miniature />
        </Side>

        <Workbench>
          <DocTabs>
            <DocTab>
              <DocTabName type="button"><Icon name="ovDoc" />OV-2</DocTabName>
              <ToolButton type="button" $narrow aria-label="Close OV-2"><Icon name="bigClose" size={14} /></ToolButton>
            </DocTab>
            <TabNav>
              <Tool icon="prev" label="Previous tab" />
              <Tool icon="next" label="Next tab" />
              <Tool icon="list" label="Tab list" />
            </TabNav>
          </DocTabs>
          <DocToolbar>
            <Tool icon="back" label="Back" />
            <Tool icon="forward" label="Forward" />
            <Grip />
            <Tool icon="layoutTree" label="Layout" />
            <Caret label="Layout options" />
            <Tool icon="routes" label="Route paths" />
            <Caret label="Route options" />
            <Tool icon="lineDiag" label="Oblique path" />
            <Tool icon="lineOrtho" label="Rectilinear path" />
            <Tool icon="lineBoth" label="Bezier path" />
            <Grip />
            <Tool icon="sizeTo" label="Autosize" />
            <Tool icon="grid1" label="Show attributes" />
            <Tool icon="grid2" label="Show operations" />
            <Tool icon="grid3" label="Show ports" />
            <Grip />
            <Tool icon="fill" label="Fill color" />
            <Caret label="Fill options" dim />
            <Tool icon="pencil" label="Pen color" />
            <Caret label="Pen options" dim />
            <Tool icon="letterA" label="Text color" />
            <Caret label="Text options" dim />
            <DisabledSelect $wide>
              <Select disabled aria-label="Font" />
              <Triangle $big $dim />
            </DisabledSelect>
            <DisabledSelect>
              <Select disabled aria-label="Font size" />
              <Triangle $big $dim />
            </DisabledSelect>
            <Tool icon="front" label="Bring to front" />
            <Tool icon="backOrder" label="Send to back" />
            <Tool icon="selectAll" label="Select same type" />
            <Tool icon="styleOrder" label="Apply style" />
            <Grip />
            <Tool icon="zoomIn" label="Zoom in" />
            <Tool icon="zoomOut" label="Zoom out" />
            <ZoomField aria-label="Zoom level" defaultValue="100%" />
            <ZoomDrop type="button" aria-label="Zoom levels"><Triangle $big /></ZoomDrop>
          </DocToolbar>
          <DocBody>
            <DiagramPalette />
            <Viewer>
              <ViewerRow>
                <DiagramCanvas />
                <ScrollBar share={56} />
              </ViewerRow>
              <ViewerFoot>
                <ScrollBar horizontal share={72} />
                <Corner />
              </ViewerFoot>
            </Viewer>
          </DocBody>
        </Workbench>
      </Body>

      <StatusBar>
        Ready
        <Spacer />
        <BusyCell>
          <svg width="14" height="14" viewBox="0 0 14 14" aria-hidden="true">
            <path d="M7 0v4M7 10v4M0 7h4M10 7h4M2 2l3 3M9 9l3 3M12 2L9 5M5 9l-3 3" stroke="#a5a49c" strokeWidth="1.500" />
          </svg>
        </BusyCell>
      </StatusBar>
    </Shell>
  );
}
